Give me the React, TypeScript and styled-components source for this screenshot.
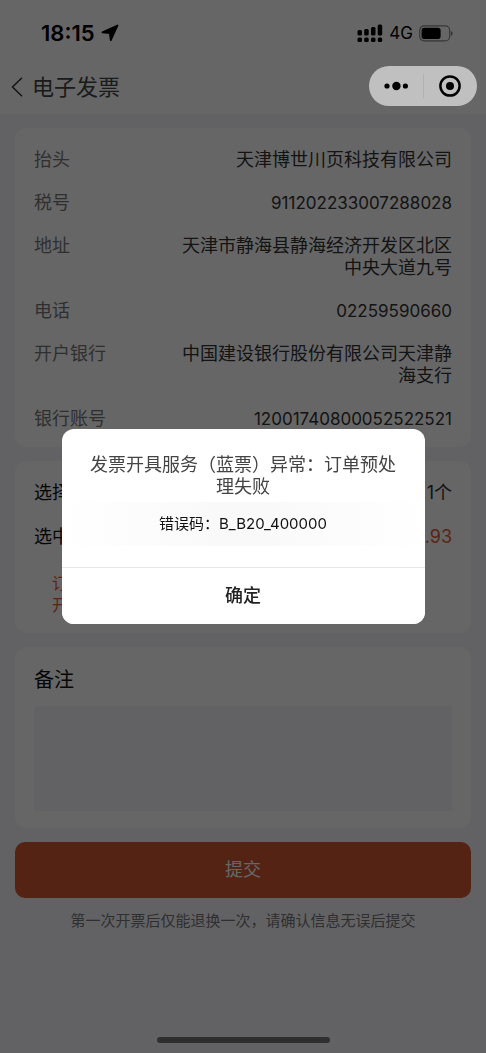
import React from "react";
import styled, { createGlobalStyle } from "styled-components";

const GlobalStyle = createGlobalStyle`
  *, *::before, *::after { box-sizing: border-box; }
  body {
    margin: 0;
    background: #f6f6fa;
    font-family: Inter, "Noto Sans CJK SC", sans-serif;
    font-size: 18px;
    line-height: 22px;
    color: #333;
  }
  button, textarea { font: inherit; border: 0; padding: 0; }
  p, h1, h2, dl, dd { margin: 0; font: inherit; }
`;

const Screen = styled.div`
  position: relative;
  min-height: 100vh;
  display: flex;
  flex-direction: column;
`;

const Header = styled.header`
  background: #fff;
  padding-bottom: 6px;
`;

const StatusBar = styled.div`
  height: 66px;
  padding: 0 33px 0 41px;
  display: flex;
  align-items: center;
  justify-content: space-between;
  color: #000;
`;

const StatusGroup = styled.div`
  display: flex;
  align-items: center;
  gap: 6px;
`;

const Clock = styled.span`
  font-size: 22px;
  font-weight: 600;
`;

const Network = styled.span`
  font-size: 17px;
`;

const NavBar = styled.nav`
  height: 42px;
  padding-left: 11px;
  display: flex;
  align-items: center;
  gap: 9px;
`;

const BackButton = styled.button`
  display: flex;
  background: none;
  color: #333;
`;

const Title = styled.h1`
  font-size: 22px;
  color: #444;
`;

const Capsule = styled.div`
  position: absolute;
  top: 66px;
  right: 9px;
  z-index: 3;
  width: 108px;
  height: 40px;
  border-radius: 20px;
  background: #c0c0c0;
  display: flex;
  align-items: center;
`;

const CapsuleButton = styled.button`
  flex: 1;
  height: 24px;
  background: none;
  display: flex;
  align-items: center;
  justify-content: center;
  & + & { border-left: 1px solid #b2b2b2; }
`;

const Content = styled.main`
  flex: 1;
  padding: 14px 15px 0;
  display: flex;
  flex-direction: column;
  gap: 14px;
`;

const Card = styled.section`
  background: #fff;
  border-radius: 12px;
  padding: 21px 19px 17px;
`;

const Fields = styled.dl<{ $gap: number }>`
  display: flex;
  flex-direction: column;
  gap: ${(p) => p.$gap}px;
`;

const Field = styled.div`
  display: flex;
  justify-content: space-between;
`;

const Label = styled.dt<{ $strong?: boolean }>`
  color: ${(p) => (p.$strong ? "#111" : "#777")};
`;

const Value = styled.dd<{ $price?: boolean; $numeric?: boolean }>`
  max-width: 280px;
  text-align: right;
  font-size: ${(p) => (p.$numeric ? 17 : 18)}px;
  color: ${(p) => (p.$price ? "#e05a34" : "#333")};
`;

const Note = styled.p`
  margin-top: 24px;
  padding: 0 18px;
  font-size: 16px;
  color: #e05a34;
`;

const RemarkLabel = styled.label`
  display: block;
  font-size: 20px;
  line-height: 24px;
  color: #111;
`;

const Remark = styled.textarea`
  display: block;
  width: 100%;
  height: 105px;
  margin-top: 14px;
  resize: none;
  outline: none;
  border-radius: 2px;
  background: #f6f6fa;
`;

const SubmitButton = styled.button`
  width: 100%;
  height: 56px;
  flex-shrink: 0;
  border-radius: 10px;
  background: #d25732;
  color: #fff;
`;

const Hint = styled.p`
  text-align: center;
  font-size: 15px;
  line-height: 18px;
  color: #777;
`;

const HomeIndicator = styled.div`
  align-self: center;
  width: 173px;
  height: 6px;
  margin-bottom: 10px;
  border-radius: 3px;
  background: #777;
`;

const Overlay = styled.div`
  position: fixed;
  inset: 0;
  z-index: 2;
  background: rgba(0, 0, 0, 0.6);
  display: flex;
  align-items: center;
  justify-content: center;
`;

const Dialog = styled.div`
  width: 75%;
  max-width: 363px;
  padding-top: 25px;
  border-radius: 12px;
  background: #fff;
  overflow: hidden;
`;

const Message = styled.p`
  padding: 0 24px;
  text-align: center;
  color: #444;
`;

const ErrorCode = styled.p`
  margin: 4px 0 21px;
  line-height: 44px;
  text-align: center;
  font-size: 15px;
  color: #111;
  background: linear-gradient(90deg, #fff, #f9f9f9 45%, #f9f9f9 55%, #fff);
`;

const ConfirmButton = styled.button`
  display: block;
  width: 100%;
  height: 57px;
  border-top: 1px solid #e8e8e8;
  background: #fff;
  font-weight: 500;
  color: #222;
`;

const company: { label: string; value: string; numeric?: boolean }[] = [
  { label: "抬头", value: "天津博世川页科技有限公司" },
  { label: "税号", value: "911202233007288028", numeric: true },
  { label: "地址", value: "天津市静海县静海经济开发区北区中央大道九号" },
  { label: "电话", value: "02259590660", numeric: true },
  { label: "开户银行", value: "中国建设银行股份有限公司天津静海支行" },
  { label: "银行账号", value: "12001740800052522521", numeric: true },
];

const LocationIcon = () => (
  <svg width="18" height="18" viewBox="0 0 18 18" aria-hidden="true">
    <path d="M16.500 1.500 9.800 16.200 8.800 9.200 1.500 8.400Z" fill="#000" stroke="#000" strokeWidth="1.800" strokeLinejoin="round" />
  </svg>
);

const SignalIcon = () => (
  <svg width="26" height="19" viewBox="0 0 26 19" aria-hidden="true">
    <rect x="0.500" y="6" width="4.500" height="5.500" rx="1.500" />
    <rect x="7.200" y="5" width="4.500" height="6.500" rx="1.500" />
    <rect x="14" y="3" width="4.500" height="8.500" rx="1.500" />
    <rect x="20.700" y="0.500" width="4.500" height="11" rx="1.500" />
    <rect x="0.500" y="13.500" width="4.500" height="4.500" rx="1.500" />
    <rect x="7.200" y="13.500" width="4.500" height="4.500" rx="1.500" />
    <rect x="14" y="13.500" width="4.500" height="4.500" rx="1.500" />
    <rect x="20.700" y="13.500" width="4.500" height="4.500" rx="1.500" />
  </svg>
);

const BatteryIcon = () => (
  <svg width="34" height="17" viewBox="0 0 34 17" aria-hidden="true">
    <rect x="0.700" y="0.900" width="30" height="15" rx="4.500" fill="none" stroke="#888" strokeWidth="1.200" />
    <rect x="2.600" y="2.800" width="19" height="11.200" rx="2.800" />
    <path d="M32 6v5a2.800 2.800 0 0 0 0-5Z" fill="#777" />
  </svg>
);

export default function App() {
  return (
    <Screen>
      <GlobalStyle />
      <Header>
        <StatusBar>
          <StatusGroup>
            <Clock>18:15</Clock>
            <LocationIcon />
          </StatusGroup>
          <StatusGroup>
            <SignalIcon />
            <Network>4G</Network>
            <BatteryIcon />
          </StatusGroup>
        </StatusBar>
        <NavBar>
          <BackButton aria-label="返回">
            <svg width="12" height="20" viewBox="0 0 12 20" fill="none" stroke="currentColor" strokeWidth="1.500">
              <path d="M11 0.800 1.500 10 11 19.200" />
            </svg>
          </BackButton>
          <Title>电子发票</Title>
        </NavBar>
      </Header>
      <Capsule>
        <CapsuleButton aria-label="更多">
          <svg width="24" height="10" viewBox="0 0 24 10">
            <circle cx="3" cy="5" r="2.600" />
            <circle cx="12.400" cy="5" r="4.200" />
            <circle cx="21.400" cy="5" r="2.600" />
          </svg>
        </CapsuleButton>
        <CapsuleButton aria-label="关闭">
          <svg width="22" height="22" viewBox="0 0 22 22">
            <circle cx="11" cy="11" r="9.600" fill="none" stroke="#000" strokeWidth="2.500" />
            <circle cx="11" cy="11" r="4" />
          </svg>
        </CapsuleButton>
      </Capsule>

      <Content>
        <Card>
          <Fields $gap={21}>
            {company.map(({ label, value, numeric }) => (
              <Field key={label}>
                <Label>{label}</Label>
                <Value $numeric={numeric}>{value}</Value>
              </Field>
            ))}
          </Fields>
        </Card>
        <Card>
          <Fields $gap={22}>
            <Field>
              <Label $strong>选择</Label>
              <Value>1个</Value>
            </Field>
            <Field>
              <Label $strong>选中</Label>
              <Value $price>.93</Value>
            </Field>
          </Fields>
          <Note>
            订<br />开
          </Note>
        </Card>
        <Card>
          <RemarkLabel htmlFor="remark">备注</RemarkLabel>
          <Remark id="remark" />
        </Card>
        <SubmitButton>提交</SubmitButton>
        <Hint>第一次开票后仅能退换一次，请确认信息无误后提交</Hint>
      </Content>
      <HomeIndicator />

      <Overlay>
        <Dialog role="alertdialog" aria-modal="true" aria-describedby="message">
          <Message id="message">发票开具服务（蓝票）异常：订单预处理失败</Message>
          <ErrorCode>错误码：B_B20_400000</ErrorCode>
          <ConfirmButton>确定</ConfirmButton>
        </Dialog>
      </Overlay>
    </Screen>
  );
}
